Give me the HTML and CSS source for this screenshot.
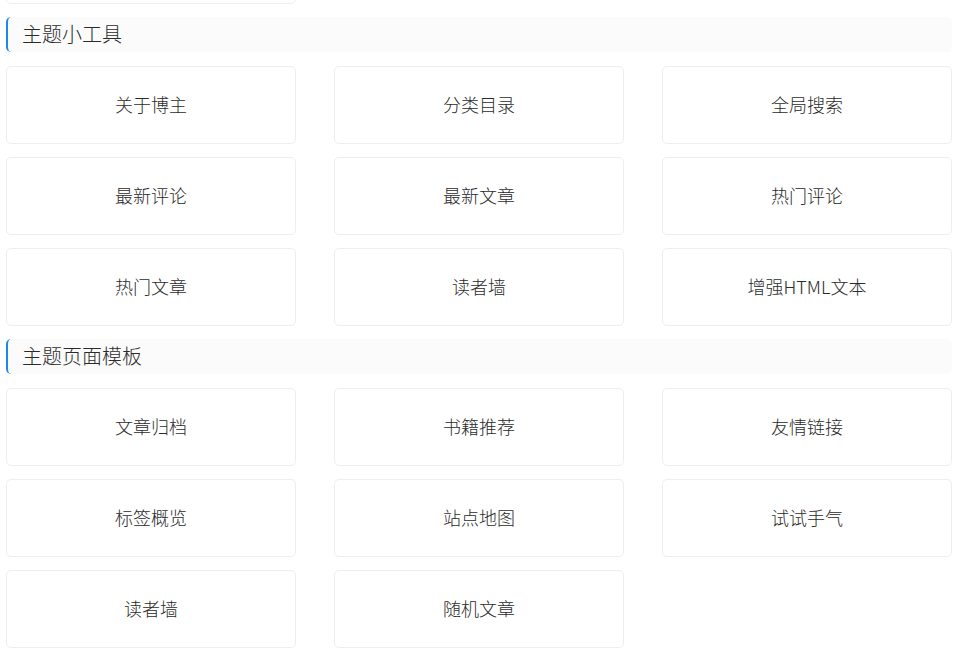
FILE: index.html
```html
<!DOCTYPE html>
<html lang="zh-CN">
<head>
<meta charset="utf-8">
<title>主题</title>
<link rel="stylesheet" href="styles.css">
</head>
<body>
<div class="page">
  <div class="grid grid-cut">
    <div class="card"></div>
  </div>
  <div class="section-title">主题小工具</div>
  <div class="grid">
    <div class="card">关于博主</div>
    <div class="card">分类目录</div>
    <div class="card">全局搜索</div>
    <div class="card">最新评论</div>
    <div class="card">最新文章</div>
    <div class="card">热门评论</div>
    <div class="card">热门文章</div>
    <div class="card">读者墙</div>
    <div class="card">增强HTML文本</div>
  </div>
  <div class="section-title">主题页面模板</div>
  <div class="grid">
    <div class="card">文章归档</div>
    <div class="card">书籍推荐</div>
    <div class="card">友情链接</div>
    <div class="card">标签概览</div>
    <div class="card">站点地图</div>
    <div class="card">试试手气</div>
    <div class="card">读者墙</div>
    <div class="card">随机文章</div>
  </div>
</div>
</body>
</html>
```
FILE: styles.css
```css
html, body {
  margin: 0;
  padding: 0;
  background: #ffffff;
}
body {
  font-family: "Noto Sans CJK SC", "Noto Sans", "Liberation Sans", sans-serif;
  color: #333333;
  overflow: hidden;
}
.page {
  padding: 0 6px 0 6px;
  width: 946px;
}
.grid {
  display: grid;
  grid-template-columns: repeat(3, 1fr);
  column-gap: 38px;
  row-gap: 13px;
}
.grid-cut {
  margin-top: -74px;
}
.card {
  box-sizing: border-box;
  height: 78px;
  padding-bottom: 3px;
  border: 1px solid #eeeeee;
  border-radius: 5px;
  background: #ffffff;
  display: flex;
  align-items: center;
  justify-content: center;
  font-size: 18px;
  font-weight: 300;
  color: #2b2b2b;
  line-height: 1;
}
.section-title {
  box-sizing: border-box;
  margin: 13px 0 14px 0;
  height: 35px;
  padding-bottom: 2px;
  background: #fbfbfb;
  border-left: 2px solid #1e88e5;
  border-radius: 5px;
  padding-left: 14px;
  display: flex;
  align-items: center;
  font-size: 20px;
  font-weight: 300;
  color: #2b2b2b;
  line-height: 1;
}
```
